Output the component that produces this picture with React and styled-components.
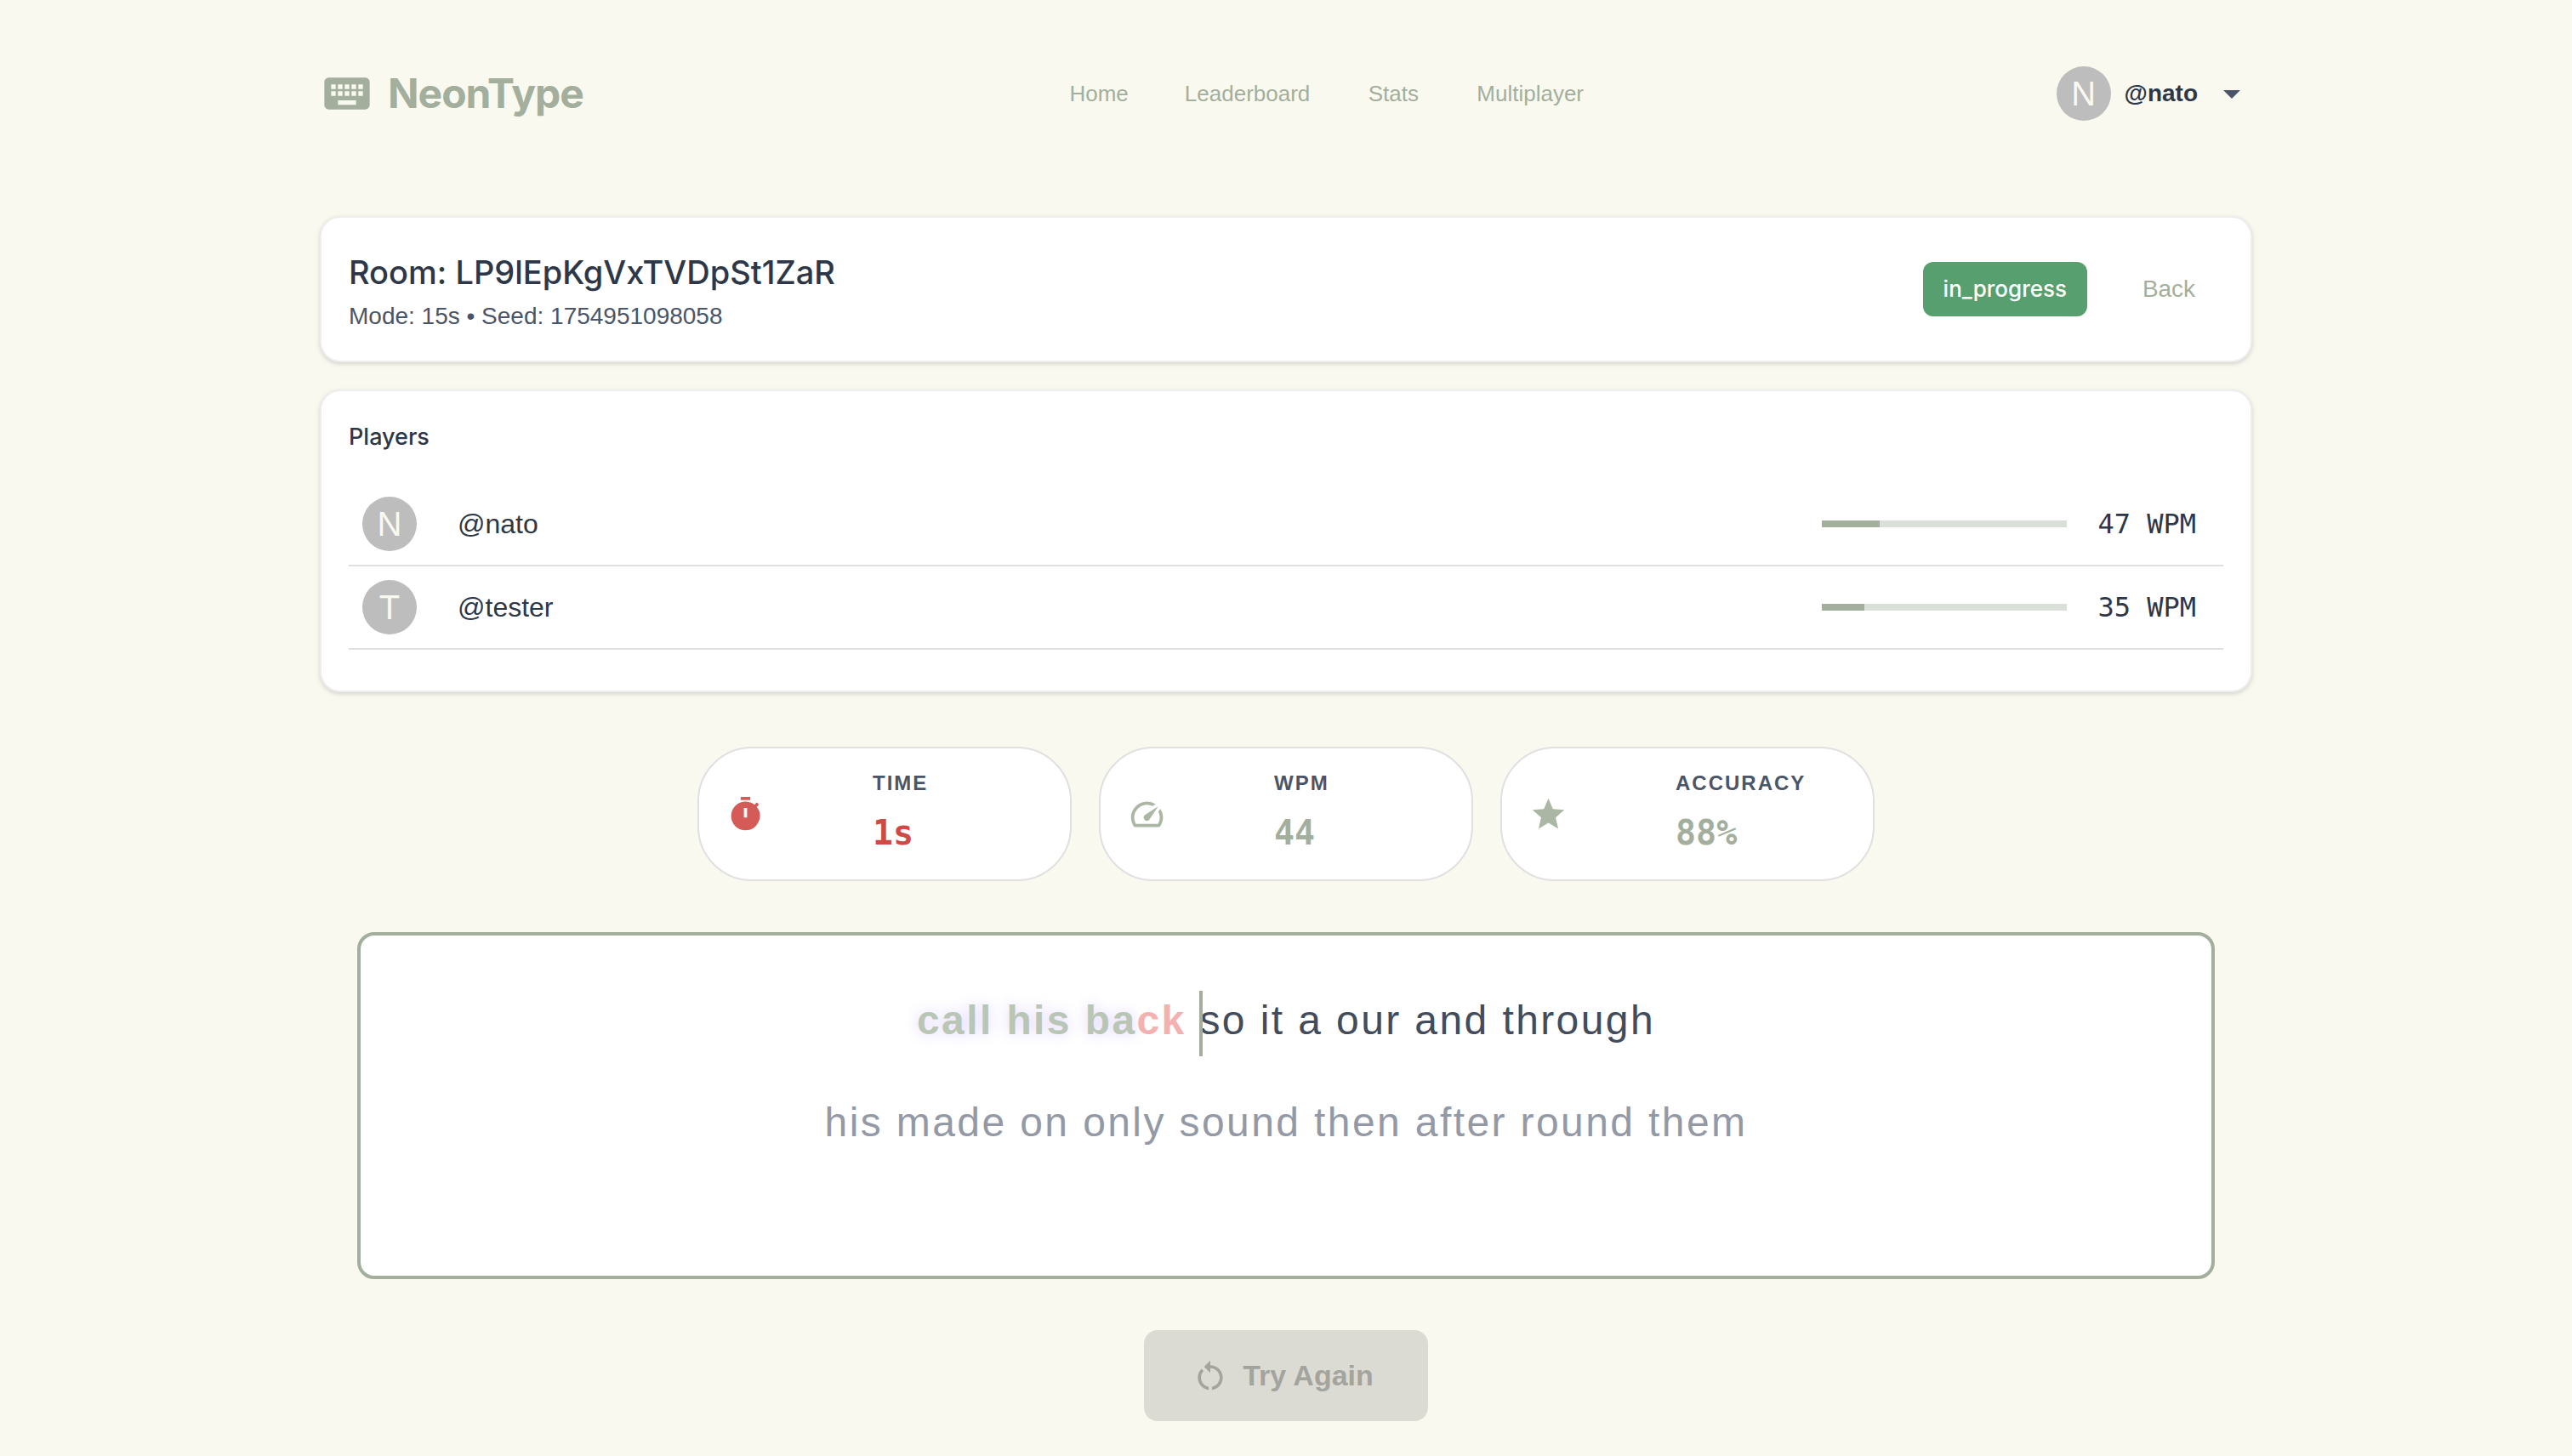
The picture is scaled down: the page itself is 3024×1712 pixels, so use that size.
import React from "react";
import styled, { createGlobalStyle } from "styled-components";
import {
  MdArrowDropDown,
  MdKeyboard,
  MdRestartAlt,
  MdSpeed,
  MdStar,
  MdTimer,
} from "react-icons/md";

const color = {
  page: "#f9f9f0",
  sage: "#a3af9c",
  ink: "#2d3748",
  muted: "#4a5568",
  danger: "#d04a45",
};

const sans = `"Liberation Sans", Arial, sans-serif`;
const display = `Inter, "Liberation Sans", sans-serif`;
const mono = `"DejaVu Sans Mono", monospace`;

const GlobalStyle = createGlobalStyle`
  *, *::before, *::after { box-sizing: border-box; }
  body {
    margin: 0;
    background: ${color.page};
    color: ${color.ink};
    font-family: ${sans};
    -webkit-font-smoothing: antialiased;
  }
  button { border: 0; background: none; font-family: inherit; cursor: pointer; }
  h1, h2, p, ul, dl, dd { margin: 0; padding: 0; }
`;

const Page = styled.div`
  max-width: 2400px;
  margin: 0 auto;
  padding: 78px 64px 40px;
`;

const Header = styled.header`
  display: flex;
  align-items: center;
  justify-content: space-between;
  height: 64px;
  margin-bottom: 112px;
`;

const Brand = styled.a`
  display: flex;
  align-items: center;
  gap: 16px;
  padding-right: 16px;
  color: ${color.sage};
  font: 700 48px/64px ${display};
  letter-spacing: -1px;
  text-decoration: none;
`;

const Nav = styled.nav`
  display: flex;
  gap: 2px;
`;

const NavLink = styled.a`
  min-width: 128px;
  padding: 0 32px;
  color: ${color.sage};
  font-size: 26px;
  line-height: 48px;
  text-align: center;
  text-decoration: none;
`;

const Profile = styled.button`
  display: flex;
  align-items: center;
  gap: 16px;
  padding: 0;
  color: ${color.ink};
  font-size: 28px;
  font-weight: 700;
  svg { color: ${color.muted}; }
`;

const Avatar = styled.span`
  display: flex;
  flex: none;
  align-items: center;
  justify-content: center;
  width: 64px;
  height: 64px;
  border-radius: 50%;
  background: #bdbdbd;
  color: ${color.page};
  font-size: 40px;
  font-weight: 400;
  line-height: 40px;
`;

const Main = styled.main`
  display: flex;
  flex-direction: column;
`;

const Card = styled.section`
  margin-bottom: 32px;
  padding: 32px;
  border: 2px solid #ededed;
  border-radius: 24px;
  background: #fff;
  box-shadow: 0 2px 6px rgba(0, 0, 0, 0.1), 0 2px 4px rgba(0, 0, 0, 0.06);
`;

const RoomCard = styled(Card)`
  display: flex;
  align-items: center;
  justify-content: space-between;
  min-height: 172px;
`;

const RoomTitle = styled.h1`
  font: 500 38px/64px ${display};
`;

const RoomMeta = styled.p`
  color: ${color.muted};
  font-size: 28px;
  line-height: 40px;
`;

const RoomActions = styled.div`
  display: flex;
  align-items: center;
  gap: 32px;
`;

const StatusChip = styled.span`
  padding: 0 24px;
  border-radius: 12px;
  background: #589f70;
  color: #fff;
  font: 500 26px/64px ${display};
`;

const BackButton = styled.button`
  min-width: 128px;
  padding: 0 16px;
  color: ${color.sage};
  font-size: 28px;
  line-height: 48px;
`;

const PlayersTitle = styled.h2`
  margin-bottom: 16px;
  font: 500 27px/44px ${display};
`;

const PlayerList = styled.ul`
  padding: 16px 0;
  list-style: none;
`;

const PlayerRow = styled.li`
  display: flex;
  align-items: center;
  gap: 32px;
  padding: 16px 32px 16px 16px;
  border-bottom: 2px solid #e0e0e0;
`;

const PlayerName = styled.span`
  flex: 1;
  padding-left: 16px;
  font-size: 32px;
  line-height: 48px;
`;

const PlayerProgress = styled.progress`
  appearance: none;
  width: 288px;
  height: 8px;
  border: 0;
  &::-webkit-progress-bar { background: #dae0d9; }
  &::-webkit-progress-value { background: ${color.sage}; }
`;

const PlayerSpeed = styled.span`
  min-width: 120px;
  font: 400 32px/48px ${mono};
  text-align: right;
`;

const Stats = styled.dl`
  display: grid;
  grid-template-columns: repeat(3, 440px);
  justify-content: center;
  gap: 32px;
  margin: 32px 0 60px;
`;

const StatPill = styled.div`
  display: flex;
  align-items: center;
  justify-content: space-between;
  height: 158px;
  padding: 0 32px;
  border: 2px solid #e0e0e0;
  border-radius: 64px;
  background: #fff;
  color: ${(p) => p.$tone};
  svg { opacity: 0.9; }
`;

const StatText = styled.div`
  width: 200px;
`;

const StatLabel = styled.dt`
  color: ${color.muted};
  font-size: 24px;
  font-weight: 700;
  line-height: 44px;
  letter-spacing: 2px;
  text-transform: uppercase;
`;

const StatValue = styled.dd`
  font: 700 40px/72px ${mono};
`;

const TypingBox = styled.section`
  display: flex;
  flex-direction: column;
  align-items: center;
  gap: 48px;
  min-height: 408px;
  margin: 0 44px 60px;
  padding: 64px;
  border: 4px solid ${color.sage};
  border-radius: 20px;
  background: #fff;
`;

const Line = styled.p`
  color: ${(p) => (p.$upcoming ? "#9499a6" : "#434c5a")};
  font-size: 48px;
  line-height: 72px;
  letter-spacing: 0.05em;
`;

const Typed = styled.span`
  color: ${(p) => (p.$wrong ? "#f4b1b1" : "#bac6b5")};
  font-weight: 700;
  text-shadow: ${(p) => (p.$wrong ? "none" : "0 0 16px rgba(124, 77, 255, 0.25)")};
`;

const Current = styled.span`
  position: relative;
  &::before {
    content: "";
    position: absolute;
    left: 0;
    top: -8px;
    width: 4px;
    height: 77px;
    background: ${color.sage};
  }
`;

const RetryButton = styled.button`
  display: flex;
  align-items: center;
  align-self: center;
  gap: 16px;
  height: 107px;
  padding: 0 64px 0 56px;
  border-radius: 16px;
  background: #dbdbd3;
  color: #a4a49f;
  font-size: 34px;
  font-weight: 700;
  cursor: default;
`;

const navItems = ["Home", "Leaderboard", "Stats", "Multiplayer"];

const players = [
  { name: "nato", wpm: 47 },
  { name: "tester", wpm: 35 },
];

const stats = [
  { label: "Time", value: "1s", Icon: MdTimer, tone: color.danger },
  { label: "WPM", value: "44", Icon: MdSpeed, tone: color.sage },
  { label: "Accuracy", value: "88%", Icon: MdStar, tone: color.sage },
];

export default function App() {
  return (
    <>
      <GlobalStyle />
      <Page>
        <Header>
          <Brand href="#home">
            <MdKeyboard size={64} />
            NeonType
          </Brand>
          <Nav>
            {navItems.map((item) => (
              <NavLink key={item} href={`#${item.toLowerCase()}`}>
                {item}
              </NavLink>
            ))}
          </Nav>
          <Profile type="button">
            <Avatar>N</Avatar>
            @nato
            <MdArrowDropDown size={48} />
          </Profile>
        </Header>

        <Main>
          <RoomCard>
            <div>
              <RoomTitle>Room: LP9lEpKgVxTVDpSt1ZaR</RoomTitle>
              <RoomMeta>Mode: 15s • Seed: 1754951098058</RoomMeta>
            </div>
            <RoomActions>
              <StatusChip>in_progress</StatusChip>
              <BackButton type="button">Back</BackButton>
            </RoomActions>
          </RoomCard>

          <Card>
            <PlayersTitle>Players</PlayersTitle>
            <PlayerList>
              {players.map(({ name, wpm }) => (
                <PlayerRow key={name}>
                  <Avatar>{name[0].toUpperCase()}</Avatar>
                  <PlayerName>@{name}</PlayerName>
                  <PlayerProgress value={wpm} max={200} aria-label={`${name} speed`} />
                  <PlayerSpeed>{wpm} WPM</PlayerSpeed>
                </PlayerRow>
              ))}
            </PlayerList>
          </Card>

          <Stats>
            {stats.map(({ label, value, Icon, tone }) => (
              <StatPill key={label} $tone={tone}>
                <Icon size={45} />
                <StatText>
                  <StatLabel>{label}</StatLabel>
                  <StatValue>{value}</StatValue>
                </StatText>
              </StatPill>
            ))}
          </Stats>

          <TypingBox>
            <Line>
              <Typed>call his ba</Typed>
              <Typed $wrong>ck</Typed> <Current>s</Current>o it a our and through
            </Line>
            <Line $upcoming>his made on only sound then after round them</Line>
          </TypingBox>

          <RetryButton type="button">
            <MdRestartAlt size={44} />
            Try Again
          </RetryButton>
        </Main>
      </Page>
    </>
  );
}
